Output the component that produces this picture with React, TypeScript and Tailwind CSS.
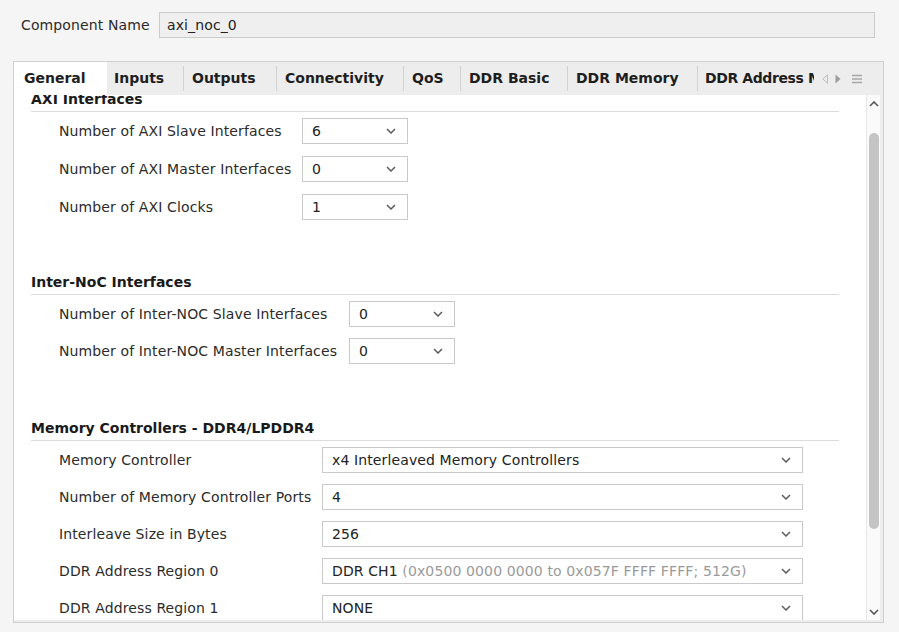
import React from "react";

type Row = { label: string; value: React.ReactNode };
type Section = {
  title: string;
  wrap: string;
  rows: Row[];
  rowsCls: string;
  labelCls: string;
  boxCls: string;
};

const Chevron = () => (
  <svg width="10" height="6" viewBox="0 0 10 6" className="shrink-0">
    <path d="M1 1l4 4 4-4" fill="none" stroke="#5c5c5c" strokeWidth="1.5" />
  </svg>
);

const sections: Section[] = [
  {
    title: "AXI Interfaces",
    wrap: "",
    rowsCls: "flex flex-col gap-[12px] mt-[6px]",
    labelCls: "w-[243px]",
    boxCls: "w-[106px]",
    rows: [
      { label: "Number of AXI Slave Interfaces", value: "6" },
      { label: "Number of AXI Master Interfaces", value: "0" },
      { label: "Number of AXI Clocks", value: "1" },
    ],
  },
  {
    title: "Inter-NoC Interfaces",
    wrap: "mt-[54px]",
    rowsCls: "flex flex-col gap-[11px] mt-[6px]",
    labelCls: "w-[290px]",
    boxCls: "w-[106px]",
    rows: [
      { label: "Number of Inter-NOC Slave Interfaces", value: "0" },
      { label: "Number of Inter-NOC Master Interfaces", value: "0" },
    ],
  },
  {
    title: "Memory Controllers - DDR4/LPDDR4",
    wrap: "mt-[56px]",
    rowsCls: "flex flex-col gap-[11px] mt-[6px]",
    labelCls: "w-[263px]",
    boxCls: "w-[481px]",
    rows: [
      { label: "Memory Controller", value: "x4 Interleaved Memory Controllers" },
      { label: "Number of Memory Controller Ports", value: "4" },
      { label: "Interleave Size in Bytes", value: "256" },
      {
        label: "DDR Address Region 0",
        value: (
          <>
            DDR CH1 <span className="text-[#9a9a9a]">(0x0500 0000 0000 to 0x057F FFFF FFFF; 512G)</span>
          </>
        ),
      },
      { label: "DDR Address Region 1", value: "NONE" },
    ],
  },
];

const tabs: { name: string; cls: string }[] = [
  { name: "General", cls: "w-[93px] pl-[10px] bg-white" },
  { name: "Inputs", cls: "w-[76px] pl-[7px]" },
  { name: "Outputs", cls: "w-[92px] pl-[8px]" },
  { name: "Connectivity", cls: "w-[126px] pl-[8px]" },
  { name: "QoS", cls: "w-[56px] pl-[8px]" },
  { name: "DDR Basic", cls: "w-[106px] pl-[8px]" },
  { name: "DDR Memory", cls: "w-[129px] pl-[8px]" },
  { name: "DDR Address Map", cls: "w-[140px] pl-[7px] tracking-[-0.4px]" },
];

export default function App() {
  return (
    <div className="w-[899px] h-[632px] bg-[#f5f5f5] font-['DejaVu_Sans',sans-serif] text-[14px] tracking-[0.12px] text-[#2b2b2b] flex flex-col overflow-hidden">
      <div className="flex items-center pt-[12px] pl-[21px] pr-[24px]">
        <div className="w-[138px] shrink-0">Component Name</div>
        <div className="flex-1 h-[26px] bg-[#efefef] border border-[#cbcbcb] flex items-center pl-[7px] text-[#222]">
          axi_noc_0
        </div>
      </div>

      <div className="mt-[23px] ml-[13px] mr-[15px] h-[562px] border border-[#cfcfcf] bg-[#ededed] flex flex-col">
        {/* tab bar */}
        <div className="h-[33px] flex items-stretch">
          <div className="w-[800px] flex items-stretch overflow-hidden font-bold tracking-normal text-[#1e1e1e]">
            {tabs.map((t, i) => (
              <React.Fragment key={t.name}>
                <div className={`${t.cls} shrink-0 flex items-center whitespace-nowrap`}>{t.name}</div>
                {i > 0 && i < tabs.length - 1 && (
                  <div className="w-px shrink-0 self-center h-[25px] bg-[#d2d2d2]" />
                )}
              </React.Fragment>
            ))}
          </div>
          <div className="flex items-center pl-[8px] gap-[7px]">
            <svg width="6" height="10" viewBox="0 0 6 10">
              <path d="M5.5 0.8L0.8 5l4.7 4.2z" fill="none" stroke="#bdbdbd" strokeWidth="1" />
            </svg>
            <svg width="6" height="10" viewBox="0 0 6 10">
              <path d="M0.5 0.5L5.5 5L0.5 9.5z" fill="#9d9d9d" />
            </svg>
            <svg width="10" height="10" viewBox="0 0 10 10" className="ml-[4px]">
              <path d="M0 1.5h10M0 5h10M0 8.5h10" stroke="#a8a8a8" strokeWidth="1.3" />
            </svg>
          </div>
        </div>

        {/* body */}
        <div className="flex-1 flex mr-[3px] mb-[2px] min-h-0">
          <div className="flex-1 bg-white overflow-hidden">
            <div className="-mt-[4px] pl-[17px] pr-[27px]">
              {sections.map((s) => (
                <div key={s.title} className={s.wrap}>
                  <div className="leading-[16px] pb-[4px] border-b border-[#dcdcdc] font-bold tracking-normal text-[#1a1a1a]">
                    {s.title}
                  </div>
                  <div className={s.rowsCls}>
                    {s.rows.map((r) => (
                      <div key={r.label} className="flex items-center pl-[28px]">
                        <div className={`${s.labelCls} shrink-0 whitespace-nowrap`}>{r.label}</div>
                        <div
                          className={`${s.boxCls} h-[26px] shrink-0 border border-[#c9c9c9] bg-white flex items-center justify-between pl-[9px] pr-[11px] text-[#222] whitespace-nowrap`}
                        >
                          <span>{r.value}</span>
                          <Chevron />
                        </div>
                      </div>
                    ))}
                  </div>
                </div>
              ))}
            </div>
          </div>
          {/* scrollbar */}
          <div className="w-[14px] bg-[#fafafa] border-l border-[#e8e8e8] flex flex-col items-center">
            <svg width="10" height="6" viewBox="0 0 10 6" className="mt-[6px]">
              <path d="M1 5l4-4 4 4" fill="none" stroke="#555" strokeWidth="1.6" />
            </svg>
            <div className="mt-[26px] w-[10px] h-[396px] rounded-full bg-[#c4c4c4]" />
            <svg width="10" height="6" viewBox="0 0 10 6" className="mt-auto mb-[5px]">
              <path d="M1 1l4 4 4-4" fill="none" stroke="#555" strokeWidth="1.6" />
            </svg>
          </div>
        </div>
      </div>
    </div>
  );
}
